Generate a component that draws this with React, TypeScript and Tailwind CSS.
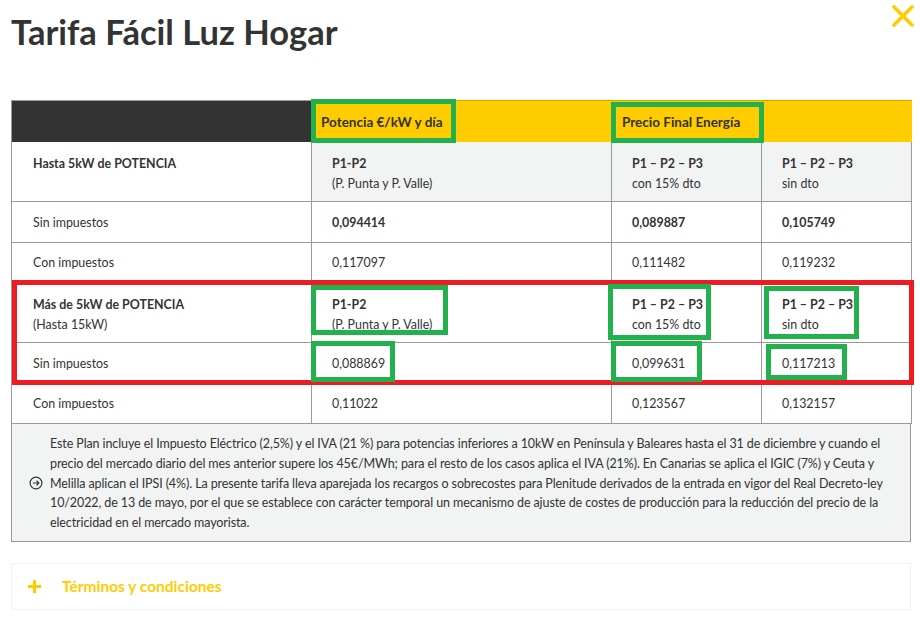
import { ReactNode } from "react";

const font = { fontFamily: "Lato, 'Open Sans', sans-serif" };

type CellProps = {
  children?: ReactNode;
  className?: string;
};

function Cell({ children, className = "" }: CellProps) {
  return (
    <div className={`border-r border-b border-[#9a9a9a] text-[12.4px] text-[#333] ${className}`}>
      {children}
    </div>
  );
}

function HeadCell({ title, sub }: { title: string; sub: string }) {
  return (
    <>
      <p className="font-bold leading-5">{title}</p>
      <p className="leading-5">{sub}</p>
    </>
  );
}

const noteLines = [
  "Este Plan incluye el Impuesto Eléctrico (2,5%) y el IVA (21 %) para potencias inferiores a 10kW en Península y Baleares hasta el 31 de diciembre y cuando el",
  "precio del mercado diario del mes anterior supere los 45€/MWh; para el resto de los casos aplica el IVA (21%). En Canarias se aplica el IGIC (7%) y Ceuta y",
  "Melilla aplican el IPSI (4%). La presente tarifa lleva aparejada los recargos o sobrecostes para Plenitude derivados de la entrada en vigor del Real Decreto-ley",
  "10/2022, de 13 de mayo, por el que se establece con carácter temporal un mecanismo de ajuste de costes de producción para la reducción del precio de la",
  "electricidad en el mercado mayorista.",
];

export default function App() {
  return (
    <div className="relative w-[920px] h-[630px] bg-white overflow-hidden" style={font}>
      <div className="flex items-start justify-between pl-[11px] pr-[5px]">
        <h1 className="mt-[12px] text-[34.5px] leading-10 font-bold text-[#333]">
          Tarifa Fácil Luz Hogar
        </h1>
        <svg width="24" height="24" viewBox="0 0 24 24" className="mt-[4px]">
          <path d="M3 3 L21 21 M21 3 L3 21" stroke="#ffcc00" strokeWidth="3.8" strokeLinecap="round" />
        </svg>
      </div>

      <div className="ml-[11px] mt-[48px] w-[900px]">
        <div className="grid grid-cols-[300px_300px_150px_150px] border-l border-[#9a9a9a]">
          {/* header */}
          <div className="h-[42px] bg-[#333333] border-t border-[#9a9a9a] border-r border-r-[#9a9a9a]" />
          <div className="h-[42px] bg-[#ffcc00] border-t border-[#c9a800] flex items-center pl-[9px] pt-[1px] text-[13.5px] font-bold text-[#333]">
            Potencia €/kW y día
          </div>
          <div className="h-[42px] bg-[#ffcc00] border-t border-[#c9a800] flex items-center pl-[10px] pt-[1px] text-[13.5px] font-bold text-[#333]">
            Precio Final Energía
          </div>
          <div className="h-[42px] bg-[#ffcc00] border-t border-[#c9a800]" />

          {/* Hasta 5kW */}
          <Cell className="h-[60px] pl-[21px] pt-[12px] bg-white">
            <p className="font-bold leading-5">Hasta 5kW de POTENCIA</p>
          </Cell>
          <Cell className="h-[60px] pl-[20px] pt-[12px] bg-[#f1f4f3]">
            <HeadCell title="P1-P2" sub="(P. Punta y P. Valle)" />
          </Cell>
          <Cell className="h-[60px] pl-[20px] pt-[12px] bg-[#f1f4f3]">
            <HeadCell title="P1 – P2 – P3" sub="con 15% dto" />
          </Cell>
          <Cell className="h-[60px] pl-[20px] pt-[12px] bg-[#f1f4f3]">
            <HeadCell title="P1 – P2 – P3" sub="sin dto" />
          </Cell>

          <Cell className="h-[41px] pl-[21px] pt-[2px] flex items-center">Sin impuestos</Cell>
          <Cell className="h-[41px] pl-[20px] pt-[2px] flex items-center font-bold">0,094414</Cell>
          <Cell className="h-[41px] pl-[20px] pt-[2px] flex items-center font-bold">0,089887</Cell>
          <Cell className="h-[41px] pl-[20px] pt-[2px] flex items-center font-bold">0,105749</Cell>

          <Cell className="h-[40px] pl-[21px] pt-[2px] flex items-center">Con impuestos</Cell>
          <Cell className="h-[40px] pl-[20px] pt-[2px] flex items-center">0,117097</Cell>
          <Cell className="h-[40px] pl-[20px] pt-[2px] flex items-center">0,111482</Cell>
          <Cell className="h-[40px] pl-[20px] pt-[2px] flex items-center">0,119232</Cell>

          {/* Más de 5kW */}
          <Cell className="h-[60px] pl-[21px] pt-[12px]">
            <HeadCell title="Más de 5kW de POTENCIA" sub="(Hasta 15kW)" />
          </Cell>
          <Cell className="h-[60px] pl-[20px] pt-[12px]">
            <HeadCell title="P1-P2" sub="(P. Punta y P. Valle)" />
          </Cell>
          <Cell className="h-[60px] pl-[20px] pt-[12px]">
            <HeadCell title="P1 – P2 – P3" sub="con 15% dto" />
          </Cell>
          <Cell className="h-[60px] pl-[20px] pt-[12px]">
            <HeadCell title="P1 – P2 – P3" sub="sin dto" />
          </Cell>

          <Cell className="h-[41px] pl-[21px] pt-[2px] flex items-center">Sin impuestos</Cell>
          <Cell className="h-[41px] pl-[20px] pt-[2px] flex items-center">0,088869</Cell>
          <Cell className="h-[41px] pl-[20px] pt-[2px] flex items-center">0,099631</Cell>
          <Cell className="h-[41px] pl-[20px] pt-[2px] flex items-center">0,117213</Cell>

          <Cell className="h-[40px] pl-[21px] pt-[2px] flex items-center">Con impuestos</Cell>
          <Cell className="h-[40px] pl-[20px] pt-[2px] flex items-center">0,11022</Cell>
          <Cell className="h-[40px] pl-[20px] pt-[2px] flex items-center">0,123567</Cell>
          <Cell className="h-[40px] pl-[20px] pt-[2px] flex items-center">0,132157</Cell>
        </div>

        {/* note */}
        <div className="h-[118px] bg-[#f1f4f3] border-x border-b border-[#9a9a9a] flex items-center pl-[17px] pr-[10px] text-[12.5px] text-[#333]">
          <svg width="14" height="14" viewBox="0 0 14 14" className="shrink-0 mt-[1px]">
            <circle cx="7" cy="7" r="5.9" fill="none" stroke="#333" strokeWidth="1.2" />
            <path d="M3.9 7 H9.8 M7.5 4.7 L9.8 7 L7.5 9.3" fill="none" stroke="#333" strokeWidth="1.2" />
          </svg>
          <div className="ml-[7px] leading-[19.7px] tracking-[-0.1px] pt-[2px]">
            {noteLines.map((line) => (
              <p key={line} className="whitespace-nowrap">
                {line}
              </p>
            ))}
          </div>
        </div>

        {/* accordion */}
        <div className="mt-[21px] h-[47px] border border-[#f2f2f2] flex items-center pl-[15px]">
          <svg width="15" height="15" viewBox="0 0 15 15">
            <path d="M7.5 1 V14 M1 7.5 H14" stroke="#ffcc00" strokeWidth="3" />
          </svg>
          <span className="ml-[20px] text-[15.5px] font-bold text-[#ffcc00]">Términos y condiciones</span>
        </div>
      </div>

      {/* annotations */}
      <div className="absolute left-[12px] top-[280px] w-[902px] h-[105px] border-[5px] border-[#ed1c24]" />
      <div className="absolute left-[311px] top-[99px] w-[145px] h-[44px] border-[5px] border-[#22b14c]" />
      <div className="absolute left-[611px] top-[102px] w-[153px] h-[41px] border-[5px] border-[#22b14c]" />
      <div className="absolute left-[311px] top-[285px] w-[137px] h-[50px] border-[5px] border-[#22b14c]" />
      <div className="absolute left-[311px] top-[341px] w-[84px] h-[41px] border-[5px] border-[#22b14c]" />
      <div className="absolute left-[608px] top-[284px] w-[103px] h-[56px] border-[5px] border-[#22b14c]" />
      <div className="absolute left-[764px] top-[286px] w-[95px] h-[53px] border-[5px] border-[#22b14c]" />
      <div className="absolute left-[611px] top-[341px] w-[91px] h-[41px] border-[5px] border-[#22b14c]" />
      <div className="absolute left-[766px] top-[344px] w-[81px] h-[36px] border-[5px] border-[#22b14c]" />
    </div>
  );
}
